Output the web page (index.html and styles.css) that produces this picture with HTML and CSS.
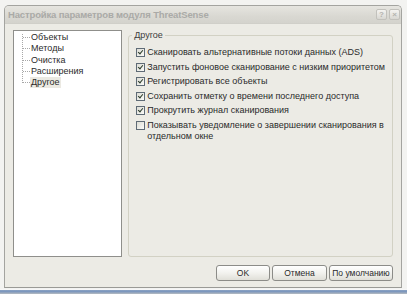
FILE: index.html
```html
<!DOCTYPE html>
<html>
<head>
<meta charset="utf-8">
<link rel="stylesheet" href="styles.css">
</head>
<body>
<div class="window">
  <div class="titlebar">
    <span class="title">Настройка параметров модуля ThreatSense</span>
    <span class="tbtns">
      <span class="tbtn">?</span>
      <span class="tbtn">×</span>
    </span>
  </div>
  <div class="content">
    <div class="tree">
      <div class="vline"></div>
      <div class="item"><span class="stub"></span><span class="lbl">Объекты</span></div>
      <div class="item"><span class="stub"></span><span class="lbl">Методы</span></div>
      <div class="item"><span class="stub"></span><span class="lbl">Очистка</span></div>
      <div class="item"><span class="stub"></span><span class="lbl">Расширения</span></div>
      <div class="item"><span class="stub"></span><span class="lbl sel">Другое</span></div>
    </div>
    <fieldset class="group">
      <legend>Другое</legend>
      <div class="rows">
        <div class="row"><span class="cb on"></span><span class="txt">Сканировать альтернативные потоки данных (ADS)</span></div>
        <div class="row"><span class="cb on"></span><span class="txt">Запустить фоновое сканирование с низким приоритетом</span></div>
        <div class="row"><span class="cb on"></span><span class="txt">Регистрировать все объекты</span></div>
        <div class="row"><span class="cb on"></span><span class="txt">Сохранить отметку о времени последнего доступа</span></div>
        <div class="row"><span class="cb on"></span><span class="txt">Прокрутить журнал сканирования</span></div>
        <div class="row"><span class="cb"></span><span class="txt">Показывать уведомление о завершении сканирования в<br>отдельном окне</span></div>
      </div>
    </fieldset>
  </div>
  <div class="footer">
    <span class="btn b-ok">OK</span>
    <span class="btn b-cancel">Отмена</span>
    <span class="btn b-def">По умолчанию</span>
  </div>
</div>
<div class="taskbar"></div>
</body>
</html>
```
FILE: styles.css
```css
html, body {
  margin: 0;
  padding: 0;
}
body {
  width: 407px;
  height: 294px;
  background: #f3f3f1;
  font-family: "Liberation Sans", Arial, sans-serif;
  font-size: 9px;
  color: #2a2a2a;
  overflow: hidden;
}
.window {
  margin: 5px 0 0 4px;
  width: 398px;
  height: 283px;
  box-sizing: border-box;
  border: 1px solid #a4a4a0;
  border-bottom-color: #9a9a96;
  border-radius: 5px 5px 0 0;
  background: #ecebe5;
  display: flex;
  flex-direction: column;
}
.titlebar {
  height: 17px;
  display: flex;
  align-items: center;
  justify-content: space-between;
  background: linear-gradient(#e6e5e0, #d9d8d2 60%, #d4d3cd);
  border-radius: 4px 4px 0 0;
  border-bottom: 1px solid #d0cfc9;
  padding: 0 1px 0 3px;
}
.title {
  font-family: "Liberation Sans", Arial, sans-serif;
  font-weight: bold;
  font-size: 9.5px;
  color: #aaaaa7;
  letter-spacing: -0.15px;
}
.tbtns {
  display: flex;
  gap: 2px;
}
.tbtn {
  width: 11px;
  height: 11px;
  box-sizing: border-box;
  border: 1px solid #c2c1bc;
  border-radius: 2px;
  background: linear-gradient(#f4f3f0, #d8d7d2);
  color: #b4b3ae;
  font-size: 8px;
  font-weight: bold;
  line-height: 9px;
  text-align: center;
}
.content {
  display: flex;
  gap: 6px;
  padding: 6px 8px 0 8px;
  height: 227px;
}
.tree {
  position: relative;
  width: 116px;
  box-sizing: border-box;
  border: 1px solid #8f8f8b;
  background: #fff;
  padding-top: 1px;
}
.vline {
  position: absolute;
  left: 8px;
  top: 3px;
  height: 49px;
  border-left: 1px dotted #a8a8a8;
}
.item {
  display: flex;
  align-items: center;
  height: 11.25px;
}
.stub {
  width: 7px;
  margin-left: 9px;
  border-top: 1px dotted #a8a8a8;
}
.lbl {
  padding: 0 1px;
  line-height: 11px;
}
.lbl.sel {
  background: #ebe9e2;
}
.group {
  margin: 0;
  width: 258px;
  box-sizing: border-box;
  border: 1px solid #d2d1c4;
  border-radius: 3px;
  padding: 0 7px;
}
.group legend {
  padding: 0 2px;
  margin-left: -4px;
  line-height: 11px;
  color: #3c3c3c;
}
.rows {
  display: flex;
  flex-direction: column;
  gap: 3.5px;
  padding-top: 6px;
}
.row {
  display: flex;
  align-items: flex-start;
  gap: 2px;
  line-height: 11px;
}
.cb {
  flex: none;
  width: 9px;
  height: 9px;
  margin-top: 1px;
  box-sizing: border-box;
  border: 1px solid #5f6b76;
  background: linear-gradient(135deg, #dcdcd4, #fafaf8);
  position: relative;
}
.cb.on::after {
  content: "";
  position: absolute;
  left: 2px;
  top: 0px;
  width: 2px;
  height: 4px;
  border: solid #2a3a2a;
  border-width: 0 1.5px 1.5px 0;
  transform: rotate(40deg);
}
.txt {
  white-space: nowrap;
}
.footer {
  display: flex;
  justify-content: flex-end;
  gap: 2px;
  padding: 8px 8px 0 0;
}
.btn {
  height: 16px;
  box-sizing: border-box;
  border: 1px solid #8c8c88;
  border-radius: 3px;
  background: linear-gradient(#ffffff, #f2f2ee 50%, #e0dfd8);
  display: flex;
  align-items: center;
  justify-content: center;
  line-height: 14px;
  font-size: 8.5px;
}
.b-ok { width: 54px; }
.b-cancel { width: 55px; }
.b-def { width: 64px; }
.taskbar {
  margin-top: 1px;
  height: 5px;
  background: linear-gradient(#f6f6f6 0, #f6f6f6 1px, #8aa2c4 1px, #7893bb 3px, #aab4c0 4px);
}
```
